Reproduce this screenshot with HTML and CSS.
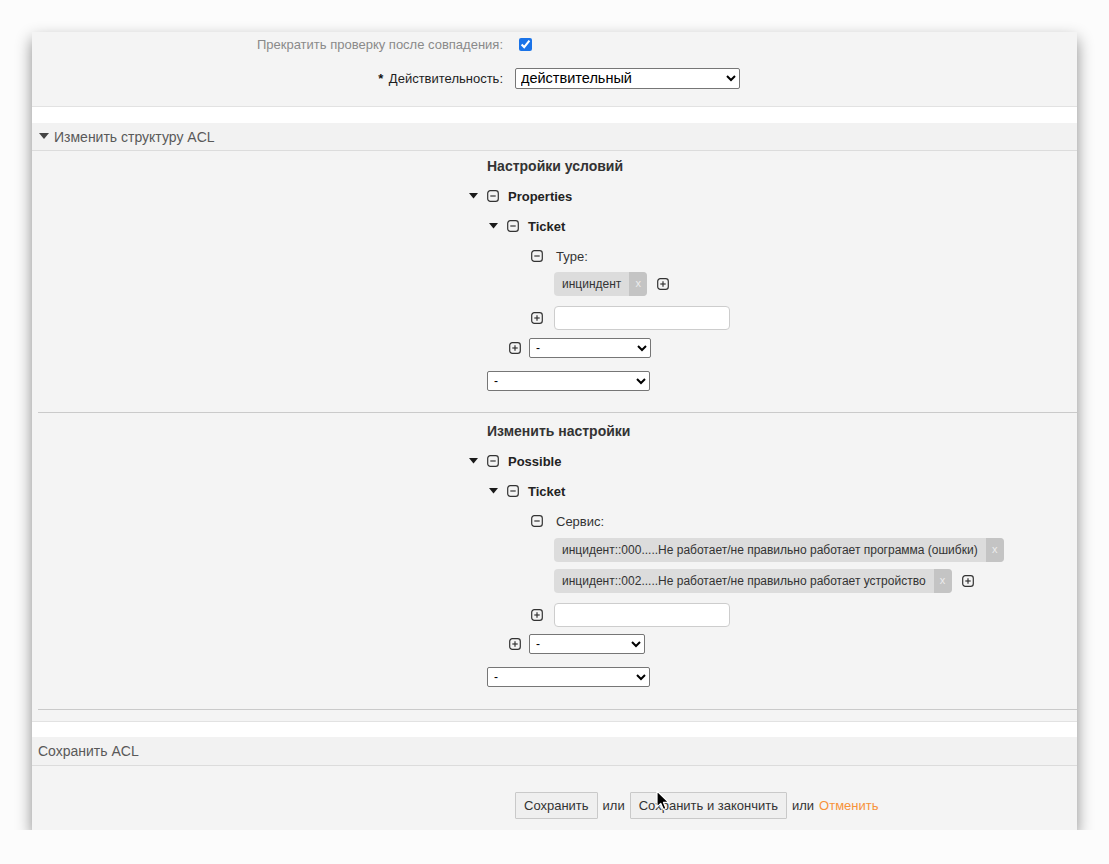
FILE: index.html
```html
<!DOCTYPE html>
<html lang="ru">
<head>
<meta charset="utf-8">
<title>ACL</title>
<link rel="stylesheet" href="styles.css">
</head>
<body>
<div class="window">
  <section class="widget widget-top">
    <div class="form-row row-stop">
      <label class="lbl lbl-muted">Прекратить проверку после совпадения:</label>
      <div class="field"><input type="checkbox" class="chk" checked></div>
    </div>
    <div class="form-row row-valid">
      <label class="lbl lbl-strong"><span class="req">*</span> Действительность:</label>
      <div class="field">
        <select class="sel sel-valid"><option>действительный</option></select>
      </div>
    </div>
  </section>

  <section class="widget widget-edit">
    <header class="wh">
      <svg class="wh-tri" width="10" height="7" viewBox="0 0 10 7"><polygon points="0,0 10,0 5,6" fill="#444"/></svg>
      <span>Изменить структуру ACL</span>
    </header>
    <div class="wc">
      <div class="tree tree-1">
        <div class="t-head">Настройки условий</div>
        <div class="t-row lvl0">
          <svg class="tri" width="9" height="6" viewBox="0 0 9 6"><polygon points="0,0 9,0 4.5,5.5" fill="#1a1a1a"/></svg>
          <svg class="box" width="12" height="12" viewBox="0 0 12 12"><rect x="0.7" y="0.7" width="10.6" height="10.6" rx="2.6" fill="none" stroke="#333" stroke-width="1.2"/><line x1="3.3" y1="6" x2="8.7" y2="6" stroke="#333" stroke-width="1.2"/></svg>
          <span class="t-key">Properties</span>
        </div>
        <div class="t-row lvl1">
          <svg class="tri" width="9" height="6" viewBox="0 0 9 6"><polygon points="0,0 9,0 4.5,5.5" fill="#1a1a1a"/></svg>
          <svg class="box" width="12" height="12" viewBox="0 0 12 12"><rect x="0.7" y="0.7" width="10.6" height="10.6" rx="2.6" fill="none" stroke="#333" stroke-width="1.2"/><line x1="3.3" y1="6" x2="8.7" y2="6" stroke="#333" stroke-width="1.2"/></svg>
          <span class="t-key">Ticket</span>
        </div>
        <div class="t-row lvl2">
          <span class="tri-sp"></span>
          <svg class="box" width="12" height="12" viewBox="0 0 12 12"><rect x="0.7" y="0.7" width="10.6" height="10.6" rx="2.6" fill="none" stroke="#333" stroke-width="1.2"/><line x1="3.3" y1="6" x2="8.7" y2="6" stroke="#333" stroke-width="1.2"/></svg>
          <span class="t-attr">Type:</span>
        </div>
        <div class="tags">
          <div class="tag-row">
            <span class="tag"><span class="tag-t">инциндент</span><span class="tag-x">x</span></span>
            <svg class="box add-after" width="12" height="12" viewBox="0 0 12 12"><rect x="0.7" y="0.7" width="10.6" height="10.6" rx="2.6" fill="none" stroke="#333" stroke-width="1.2"/><line x1="3.3" y1="6" x2="8.7" y2="6" stroke="#333" stroke-width="1.2"/><line x1="6" y1="3.3" x2="6" y2="8.7" stroke="#333" stroke-width="1.2"/></svg>
          </div>
        </div>
        <div class="add-row add-input">
          <svg class="box" width="12" height="12" viewBox="0 0 12 12"><rect x="0.7" y="0.7" width="10.6" height="10.6" rx="2.6" fill="none" stroke="#333" stroke-width="1.2"/><line x1="3.3" y1="6" x2="8.7" y2="6" stroke="#333" stroke-width="1.2"/><line x1="6" y1="3.3" x2="6" y2="8.7" stroke="#333" stroke-width="1.2"/></svg>
          <input type="text" class="txt">
        </div>
        <div class="add-row add-sel1">
          <svg class="box" width="12" height="12" viewBox="0 0 12 12"><rect x="0.7" y="0.7" width="10.6" height="10.6" rx="2.6" fill="none" stroke="#333" stroke-width="1.2"/><line x1="3.3" y1="6" x2="8.7" y2="6" stroke="#333" stroke-width="1.2"/><line x1="6" y1="3.3" x2="6" y2="8.7" stroke="#333" stroke-width="1.2"/></svg>
          <select class="sel sel-small w122"><option>-</option></select>
        </div>
        <div class="add-row add-sel0">
          <select class="sel sel-small w163"><option>-</option></select>
        </div>
      </div>
      <hr class="sep">
      <div class="tree tree-2">
        <div class="t-head">Изменить настройки</div>
        <div class="t-row lvl0">
          <svg class="tri" width="9" height="6" viewBox="0 0 9 6"><polygon points="0,0 9,0 4.5,5.5" fill="#1a1a1a"/></svg>
          <svg class="box" width="12" height="12" viewBox="0 0 12 12"><rect x="0.7" y="0.7" width="10.6" height="10.6" rx="2.6" fill="none" stroke="#333" stroke-width="1.2"/><line x1="3.3" y1="6" x2="8.7" y2="6" stroke="#333" stroke-width="1.2"/></svg>
          <span class="t-key">Possible</span>
        </div>
        <div class="t-row lvl1">
          <svg class="tri" width="9" height="6" viewBox="0 0 9 6"><polygon points="0,0 9,0 4.5,5.5" fill="#1a1a1a"/></svg>
          <svg class="box" width="12" height="12" viewBox="0 0 12 12"><rect x="0.7" y="0.7" width="10.6" height="10.6" rx="2.6" fill="none" stroke="#333" stroke-width="1.2"/><line x1="3.3" y1="6" x2="8.7" y2="6" stroke="#333" stroke-width="1.2"/></svg>
          <span class="t-key">Ticket</span>
        </div>
        <div class="t-row lvl2">
          <span class="tri-sp"></span>
          <svg class="box" width="12" height="12" viewBox="0 0 12 12"><rect x="0.7" y="0.7" width="10.6" height="10.6" rx="2.6" fill="none" stroke="#333" stroke-width="1.2"/><line x1="3.3" y1="6" x2="8.7" y2="6" stroke="#333" stroke-width="1.2"/></svg>
          <span class="t-attr">Сервис:</span>
        </div>
        <div class="tags tags-2">
          <div class="tag-row">
            <span class="tag"><span class="tag-t">инцидент::000.....Не работает/не правильно работает программа (ошибки)</span><span class="tag-x">x</span></span>
          </div>
          <div class="tag-row">
            <span class="tag"><span class="tag-t">инцидент::002.....Не работает/не правильно работает устройство</span><span class="tag-x">x</span></span>
            <svg class="box add-after" width="12" height="12" viewBox="0 0 12 12"><rect x="0.7" y="0.7" width="10.6" height="10.6" rx="2.6" fill="none" stroke="#333" stroke-width="1.2"/><line x1="3.3" y1="6" x2="8.7" y2="6" stroke="#333" stroke-width="1.2"/><line x1="6" y1="3.3" x2="6" y2="8.7" stroke="#333" stroke-width="1.2"/></svg>
          </div>
        </div>
        <div class="add-row add-input">
          <svg class="box" width="12" height="12" viewBox="0 0 12 12"><rect x="0.7" y="0.7" width="10.6" height="10.6" rx="2.6" fill="none" stroke="#333" stroke-width="1.2"/><line x1="3.3" y1="6" x2="8.7" y2="6" stroke="#333" stroke-width="1.2"/><line x1="6" y1="3.3" x2="6" y2="8.7" stroke="#333" stroke-width="1.2"/></svg>
          <input type="text" class="txt">
        </div>
        <div class="add-row add-sel1">
          <svg class="box" width="12" height="12" viewBox="0 0 12 12"><rect x="0.7" y="0.7" width="10.6" height="10.6" rx="2.6" fill="none" stroke="#333" stroke-width="1.2"/><line x1="3.3" y1="6" x2="8.7" y2="6" stroke="#333" stroke-width="1.2"/><line x1="6" y1="3.3" x2="6" y2="8.7" stroke="#333" stroke-width="1.2"/></svg>
          <select class="sel sel-small w116"><option>-</option></select>
        </div>
        <div class="add-row add-sel0">
          <select class="sel sel-small w163"><option>-</option></select>
        </div>
      </div>
      <hr class="sep sep-bottom">
    </div>
  </section>

  <section class="widget widget-save">
    <header class="wh wh-plain"><span>Сохранить ACL</span></header>
    <div class="wc actions">
      <button class="btn">Сохранить</button>
      <span class="or">или</span>
      <button class="btn">Сохранить и закончить</button>
      <span class="or">или</span>
      <a class="cancel" href="#">Отменить</a>
    </div>
  </section>

  <svg class="cursor" width="14" height="22" viewBox="0 0 14 22"><path d="M1 1 L1 17 L4.8 13.4 L7.4 19.6 L10 18.5 L7.5 12.4 L12.6 12.4 Z" fill="#000" stroke="#fff" stroke-width="1.2" stroke-linejoin="round"/></svg>
</div>
</body>
</html>
```
FILE: styles.css
```css
html, body {
  margin: 0;
  padding: 0;
}
body {
  background: #fcfcfc;
  font-family: "Liberation Sans", Arial, sans-serif;
  font-size: 13px;
  color: #333;
}
.window {
  position: relative;
  margin: 32px 0 0 32px;
  width: 1045px;
  background: #fff;
  box-shadow: 0 7px 15px rgba(0, 0, 0, 0.45);
}
.widget {
  background: #f4f4f4;
}
.widget-edit {
  margin-top: 16px;
}
.widget-save {
  margin-top: 15px;
}

/* top form */
.widget-top {
  padding: 2px 0 17px;
  border-bottom: 1px solid #e2e2e2;
}
.form-row {
  display: grid;
  grid-template-columns: 471px 1fr;
  column-gap: 12px;
  align-items: center;
}
.row-stop {
  height: 20px;
}
.row-valid {
  margin-top: 13px;
  height: 22px;
}
.lbl {
  text-align: right;
  font-size: 13px;
}
.lbl-muted {
  color: #8a8a8a;
}
.lbl-strong {
  color: #1e1e1e;
}
.req {
  font-weight: bold;
  color: #111;
  margin-right: 2px;
}
.chk {
  margin: 0 0 0 4px;
  width: 13px;
  height: 13px;
  accent-color: #1a73e8;
  display: block;
}
.sel {
  font-family: "Liberation Sans", Arial, sans-serif;
  color: #000;
  background: #fff;
  border: 1px solid #767676;
  border-radius: 2px;
  display: block;
}
.sel-valid {
  width: 225px;
  height: 21px;
  font-size: 14.5px;
  padding: 0 1px;
}
.sel-small {
  height: 20px;
  font-size: 12px;
  padding: 0 2px;
}
.w122 { width: 122px; }
.w116 { width: 116px; }
.w163 { width: 163px; }

/* headers */
.wh {
  height: 27px;
  display: flex;
  align-items: center;
  gap: 5px;
  padding-left: 7px;
  border-bottom: 1px solid #dcdcdc;
  color: #595959;
  font-size: 14px;
  background: #f2f2f2;
}
.wh-plain {
  padding-left: 6px;
  height: 28px;
}
.wh-tri {
  display: block;
  margin-top: -1px;
}
.wc {
  display: flow-root;
}
.widget-edit .wc {
  border-bottom: 1px solid #e2e2e2;
}

/* tree */
.tree {
  margin-left: 437px;
}
.t-head {
  height: 30px;
  line-height: 30px;
  padding-left: 18px;
  font-size: 14px;
  font-weight: bold;
  color: #333;
}
.tree-2 {
  margin-top: 3px;
}
.t-row {
  height: 30px;
  display: flex;
  align-items: center;
}
.lvl1 { padding-left: 20px; }
.lvl2 { padding-left: 44px; }
.tri {
  display: block;
  width: 9px;
  margin-right: 9px;
}
.tri-sp {
  width: 18px;
}
.box {
  display: block;
  flex: none;
}
.t-key {
  margin-left: 9px;
  font-size: 13px;
  font-weight: bold;
  color: #222;
}
.t-attr {
  margin-left: 13px;
  font-size: 13px;
  color: #333;
}
.tags {
  margin-top: 1px;
  padding-left: 85px;
  display: flex;
  flex-direction: column;
  gap: 7px;
}
.tags-2 {
  margin-top: 2px;
}
.tag-row {
  display: flex;
  align-items: center;
}
.tag {
  display: inline-flex;
  height: 24px;
  border-radius: 4px;
  background: #dcdcdc;
  overflow: hidden;
  align-items: stretch;
}
.tag-t {
  padding: 0 8px;
  line-height: 24px;
  font-size: 12px;
  color: #333;
  white-space: nowrap;
}
.tag-x {
  width: 18px;
  background: #c4c4c4;
  color: #ececec;
  font-size: 11px;
  line-height: 23px;
  text-align: center;
}
.add-after {
  margin-left: 10px;
}
.add-row {
  display: flex;
  align-items: center;
}
.add-input {
  margin-top: 10px;
  padding-left: 62px;
}
.add-input .txt {
  margin-left: 11px;
}
.txt {
  width: 176px;
  height: 24px;
  box-sizing: border-box;
  border: 1px solid #cdcdcd;
  border-radius: 4px;
  background: #fff;
  display: block;
}
.add-sel1 {
  margin-top: 8px;
  padding-left: 40px;
}
.add-sel1 .sel {
  margin-left: 8px;
}
.add-sel0 {
  margin-top: 13px;
  padding-left: 18px;
}
.tree-2 .add-sel1 {
  margin-top: 7px;
}
.sep {
  border: 0;
  height: 1px;
  background: #cacaca;
  margin: 21px 0 0 6px;
}
.sep-bottom {
  margin-top: 22px;
  margin-bottom: 11px;
}

/* actions */
.actions {
  padding: 26px 0 11px 483px;
  display: flex;
  align-items: center;
  gap: 5px;
}
.btn {
  height: 27px;
  padding: 0 8px;
  font-family: "Liberation Sans", Arial, sans-serif;
  font-size: 13px;
  color: #333;
  background: #efefef;
  border: 1px solid #c9c9c9;
  border-radius: 1px;
}
.or {
  font-size: 13px;
  color: #333;
}
.cancel {
  font-size: 13px;
  color: #f7923a;
  text-decoration: none;
}
.cursor {
  position: absolute;
  left: 624px;
  top: 758px;
}
```
